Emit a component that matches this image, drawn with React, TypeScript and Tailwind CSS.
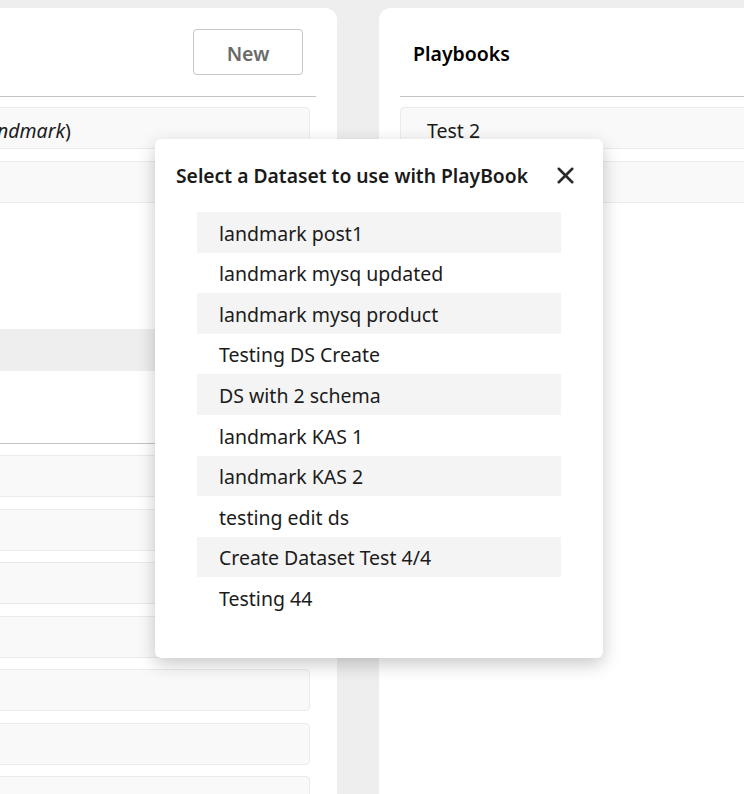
import { X } from 'lucide-react';

const datasets = [
  'landmark post1',
  'landmark mysq updated',
  'landmark mysq product',
  'Testing DS Create',
  'DS with 2 schema',
  'landmark KAS 1',
  'landmark KAS 2',
  'testing edit ds',
  'Create Dataset Test 4/4',
  'Testing 44',
];

function ListItem({ children }: { children?: React.ReactNode }) {
  return (
    <div className="flex h-[42px] items-center rounded border border-[#ebebeb] bg-[#f9f9f9] px-[26px] pt-[5px] text-[19.5px] text-[#1b1b1b]">
      {children}
    </div>
  );
}

function SelectDatasetModal() {
  return (
    <div className="absolute left-[155px] top-[139px] w-[448px] rounded-md bg-white pb-[40px] shadow-[0_6px_18px_rgba(0,0,0,0.22)]">
      <div className="flex h-[73px] items-center justify-between pl-[21px] pr-[24px]">
        <h2 className="pt-[1px] text-[19.3px] font-semibold text-[#1a1a1a]">Select a Dataset to use with PlayBook</h2>
        <button className="text-[#2b2b2b]" type="button">
          <X size={27} strokeWidth={2.3} />
        </button>
      </div>
      <ul className="mx-[42px]">
        {datasets.map((name, i) => (
          <li
            key={name}
            className={`flex h-[40.6px] items-center pl-[22px] pt-[2px] text-[19.5px] text-[#1b1b1b] ${i % 2 === 0 ? 'bg-[#f4f4f4]' : ''}`}
          >
            {name}
          </li>
        ))}
      </ul>
    </div>
  );
}

export default function App() {
  return (
    <div
      className="relative h-[794px] w-[744px] overflow-hidden bg-[#eeeeee]"
      style={{ fontFamily: '"Noto Sans", "Open Sans", sans-serif' }}
    >
      <div className="flex gap-[42px] pt-[8px]">
        {/* datasets card */}
        <div className="ml-[-176px] h-[800px] w-[513px] shrink-0 rounded-xl bg-white px-[21px]">
          <div className="flex h-[89px] items-center justify-end border-b border-[#c4c4c4] pr-[13px]">
            <button
              className="h-[46px] w-[110px] rounded border border-[#c6c6c6] bg-white pt-[3px] text-[19.5px] font-semibold text-[#6a6a6a]"
              type="button"
            >
              New
            </button>
          </div>
          <div className="mr-[6px] mt-[10px] flex flex-col gap-[12px]">
            <ListItem>
              <span className="whitespace-nowrap">
                Sample DS (<em>landmark</em>)
              </span>
            </ListItem>
            <ListItem />
          </div>
          <div className="-mx-[21px] mt-[126px] h-[42px] bg-[#eeeeee]" />
          <div className="mt-[72px] border-t border-[#c4c4c4]" />
          <div className="mr-[6px] mt-[11px] flex flex-col gap-[11.5px]">
            {Array.from({ length: 7 }).map((_, i) => (
              <ListItem key={i} />
            ))}
          </div>
        </div>

        {/* playbooks card */}
        <div className="h-[800px] w-[420px] shrink-0 rounded-xl bg-white px-[21px]">
          <div className="flex h-[89px] items-center border-b border-[#c4c4c4] pl-[13px]">
            <h2 className="pt-[3px] text-[19.5px] font-semibold text-black">Playbooks</h2>
          </div>
          <div className="mt-[10px] flex flex-col gap-[12px]">
            <ListItem>Test 2</ListItem>
            <ListItem />
          </div>
        </div>
      </div>

      <SelectDatasetModal />
    </div>
  );
}
